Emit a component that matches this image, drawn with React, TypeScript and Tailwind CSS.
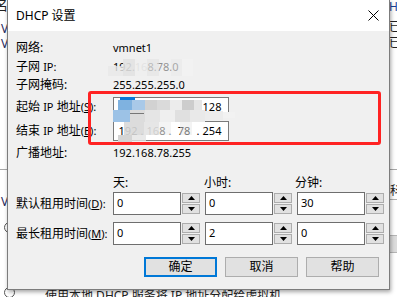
import React from "react";

const F = "font-['Noto_Sans','Noto_Sans_CJK_SC',sans-serif]";

function Up() {
  return (
    <svg width="7" height="4" viewBox="0 0 7 4">
      <path d="M0 4 L3.5 0 L7 4 Z" fill="#000" />
    </svg>
  );
}
function Down() {
  return (
    <svg width="7" height="4" viewBox="0 0 7 4">
      <path d="M0 0 L3.5 4 L7 0 Z" fill="#000" />
    </svg>
  );
}

function Spin({ v, cls }: { v: string; cls?: string }) {
  return (
    <div className={"flex h-[23px] shrink-0 " + (cls ?? "")}>
      <div className="w-[68px] h-full border border-[#6e6e6e] bg-white pl-[3px] text-[11px] leading-[19px] text-black">
        {v}
      </div>
      <div className="ml-[1px] w-[18px] flex flex-col gap-[1px] pt-[1px]">
        <div className="h-[10px] bg-[#e1e1e1] border border-[#adadad] flex items-center justify-center">
          <Up />
        </div>
        <div className="h-[10px] bg-[#e1e1e1] border border-[#adadad] flex items-center justify-center">
          <Down />
        </div>
      </div>
    </div>
  );
}

function IpBox({ f }: { f: string[] }) {
  return (
    <div className="w-[116px] h-[20px] shrink-0 border border-[#7a7a7a] bg-white flex items-center pl-[3px] text-[11px] leading-[18px]">
      {f.map((x, i) => (
        <React.Fragment key={i}>
          {i > 0 && <span className="w-[6px] text-center">.</span>}
          <span className="w-[22px] text-center">{x}</span>
        </React.Fragment>
      ))}
    </div>
  );
}

function Btn({ t, def }: { t: string; def?: boolean }) {
  return (
    <div
      className={
        "w-[73px] h-[20px] bg-[#e1e1e1] flex items-center justify-center text-[12px] leading-none text-black " +
        (def ? "border-2 border-[#0078d7]" : "border border-[#adadad]")
      }
    >
      {t}
    </div>
  );
}

function Key({ c }: { c: string }) {
  return (
    <span className="text-[11px]">
      (<span className="underline underline-offset-[1px]">{c}</span>):
    </span>
  );
}

function Lat({ t }: { t: string }) {
  return <span className="text-[11px]">{t}</span>;
}

const LBL = "w-[97px] shrink-0 whitespace-nowrap";

export default function App() {
  return (
    <div className={"relative w-[397px] h-[297px] overflow-hidden bg-white text-black " + F}>
      {/* background window content */}
      <div className="absolute left-[-5px] top-[-4px] text-[13px] text-[#222]">名</div>
      <div className="absolute left-[1px] top-[20px] text-[12px] text-[#1f2a60]">V</div>
      <div className="absolute left-[1px] top-[35px] text-[12px] text-[#1f2a60]">V</div>
      <div className="absolute left-0 top-[169px] w-full h-[1px] bg-[#a8a8a8]" />
      <div className="absolute left-[1px] top-[193px] text-[12px] text-[#1f2a60]">V</div>
      <div className="absolute left-[4px] top-[222px] w-[11px] h-[11px] rounded-full border border-[#555]" />
      <div className="absolute left-[4px] top-[287px] w-[11px] h-[11px] rounded-full border border-[#555]" />
      <div className="absolute left-[45px] top-[288px] text-[12px] leading-[16px] text-[#222]">使用本地 DHCP 服务将 IP 地址分配给虚拟机</div>
      <div className="absolute left-[389px] top-[0px] text-[12px] leading-[14px] text-[#1a3f9a]">He</div>
      <div className="absolute left-[389px] top-[20px] text-[12px] leading-[14px] text-[#222]">已</div>
      <div className="absolute left-[389px] top-[36px] text-[12px] leading-[14px] text-[#222]">已</div>
      <div className="absolute left-[386px] top-[199px] w-[20px] h-[1px] bg-[#b0b0b0]" />
      <div className="absolute left-[390px] top-[184px] text-[12px] leading-[14px] text-[#222]">科</div>
      <div className="absolute left-[386px] top-[235px] w-[20px] h-[18px] bg-[#dcdcdc] border border-[#b5b5b5]" />

      {/* dialog window */}
      <div className="absolute left-[7px] top-0 w-[383px] h-[290px] border-x border-b border-[#7c7c7c] bg-[#f0f0f0] shadow-[1px_2px_4px_rgba(0,0,0,0.35)] flex flex-col">
        <div className="h-[31px] bg-white flex items-center justify-between pl-[8px] pr-[10px] shrink-0">
          <span className="text-[12px] leading-none">DHCP 设置</span>
          <svg width="11" height="11" viewBox="0 0 11 11">
            <path d="M0.5 0.5 L10.5 10.5 M10.5 0.5 L0.5 10.5" stroke="#000" strokeWidth="1" />
          </svg>
        </div>

        <div className="flex flex-col pl-[8px] text-[12px]">
          <div className="mt-[8px] h-[18px] flex items-center">
            <span className={LBL}>网络:</span>
            <span className="text-[11px]">vmnet1</span>
          </div>
          <div className="mt-[1px] h-[18px] flex items-center">
            <span className={LBL}>
              子网 <Lat t="IP:" />
            </span>
            <span className="text-[11px]">192.168.78.0</span>
          </div>
          <div className="h-[18px] flex items-center">
            <span className={LBL}>子网掩码:</span>
            <span className="text-[11px]">255.255.255.0</span>
          </div>
          <div className="mt-[3px] h-[20px] flex items-center">
            <span className={LBL}>
              起始 <Lat t="IP" /> 地址<Key c="S" />
            </span>
            <IpBox f={["192", "168", "78", "128"]} />
          </div>
          <div className="mt-[4px] h-[20px] flex items-center">
            <span className={LBL}>
              结束 <Lat t="IP" /> 地址<Key c="E" />
            </span>
            <IpBox f={["192", "168", "78", "254"]} />
          </div>
          <div className="mt-[3px] h-[18px] flex items-center">
            <span className={LBL}>广播地址:</span>
            <span className="text-[11px]">192.168.78.255</span>
          </div>

          <div className="mt-[12px] h-[18px] flex items-center">
            <span className={LBL} />
            <span className="w-[91px]">天:</span>
            <span className="w-[91px]">小时:</span>
            <span>分钟:</span>
          </div>
          <div className="h-[23px] flex items-center">
            <span className={LBL}>
              默认租用时间<Key c="D" />
            </span>
            <Spin v="0" />
            <Spin v="0" cls="ml-[5px]" />
            <Spin v="30" cls="ml-[5px]" />
          </div>
          <div className="mt-[7px] h-[23px] flex items-center">
            <span className={LBL}>
              最长租用时间<Key c="M" />
            </span>
            <Spin v="0" />
            <Spin v="2" cls="ml-[5px]" />
            <Spin v="0" cls="ml-[5px]" />
          </div>

          <div className="mt-[12px] flex justify-end gap-[8px] pr-[10px]">
            <Btn t="确定" def />
            <Btn t="取消" />
            <Btn t="帮助" />
          </div>
        </div>
      </div>

      {/* mosaic over subnet IP */}
      <div className="absolute left-[123px] top-[59px] w-[70px] h-[17px] flex">
        <div className="w-[12px] h-full bg-[#e2e2e2]/90" />
        <div className="w-[12px] h-full bg-[#eeeeee]/95" />
        <div className="w-[12px] h-full bg-[#e6e6e6]/80" />
        <div className="w-[12px] h-full bg-[#f0f0f0]/60" />
        <div className="w-[11px] h-full bg-[#e9e9e9]/70" />
        <div className="w-[11px] h-full bg-[#f3f3f3]/80" />
      </div>
      <div className="absolute left-[108px] top-[66px] w-[15px] h-[10px] bg-[#e8e8e8]/80" />

      {/* mosaic over IP boxes */}
      <div className="absolute left-[120px] top-[97px] w-[15px] h-[3px] bg-[#0a78d7]" />
      <div className="absolute left-[118px] top-[100px] w-[14px] h-[10px] bg-[#7fb2e0]" />
      <div className="absolute left-[132px] top-[100px] w-[13px] h-[10px] bg-[#a9c9e8]" />
      <div className="absolute left-[145px] top-[100px] w-[12px] h-[10px] bg-[#d2d2d2]" />
      <div className="absolute left-[157px] top-[100px] w-[13px] h-[10px] bg-[#dadada]" />
      <div className="absolute left-[170px] top-[100px] w-[12px] h-[10px] bg-[#ececec]" />
      <div className="absolute left-[182px] top-[100px] w-[12px] h-[10px] bg-[#cdcdcd]" />
      <div className="absolute left-[194px] top-[100px] w-[8px] h-[10px] bg-[#e6e6e6]" />
      <div className="absolute left-[113px] top-[110px] w-[17px] h-[12px] bg-[#9cc2e6]" />
      <div className="absolute left-[130px] top-[110px] w-[15px] h-[12px] bg-[#dcdcdc]" />
      <div className="absolute left-[145px] top-[110px] w-[15px] h-[12px] bg-[#e5e5e5]" />
      <div className="absolute left-[160px] top-[110px] w-[15px] h-[12px] bg-[#efefef]" />
      <div className="absolute left-[175px] top-[110px] w-[15px] h-[12px] bg-[#e0e0e0]" />
      <div className="absolute left-[190px] top-[110px] w-[15px] h-[12px] bg-[#e9e9e9]" />
      <div className="absolute left-[205px] top-[111px] w-[18px] h-[9px] bg-[#ececec]" />
      <div className="absolute left-[223px] top-[112px] w-[12px] h-[6px] bg-[#f2f2f2]" />
      <div className="absolute left-[130px] top-[113px] w-[14px] h-[1px] bg-[#777]" />
      <div className="absolute left-[124px] top-[122px] w-[20px] h-[13px] bg-[#d8d8d8]/90" />
      <div className="absolute left-[144px] top-[122px] w-[15px] h-[13px] bg-[#e3e3e3]/90" />
      <div className="absolute left-[159px] top-[122px] w-[12px] h-[13px] bg-[#ededed]/60" />
      <div className="absolute left-[180px] top-[122px] w-[12px] h-[13px] bg-[#e8e8e8]/50" />
      <div className="absolute left-[118px] top-[135px] w-[14px] h-[10px] bg-[#d4d4d4]" />
      <div className="absolute left-[132px] top-[135px] w-[14px] h-[6px] bg-[#e4e4e4]/80" />

      {/* red annotation rectangle */}
      <div className="absolute left-[88px] top-[91px] w-[293px] h-[54px] border-[3px] border-[#ff2222] rounded-[3px]" />
    </div>
  );
}
